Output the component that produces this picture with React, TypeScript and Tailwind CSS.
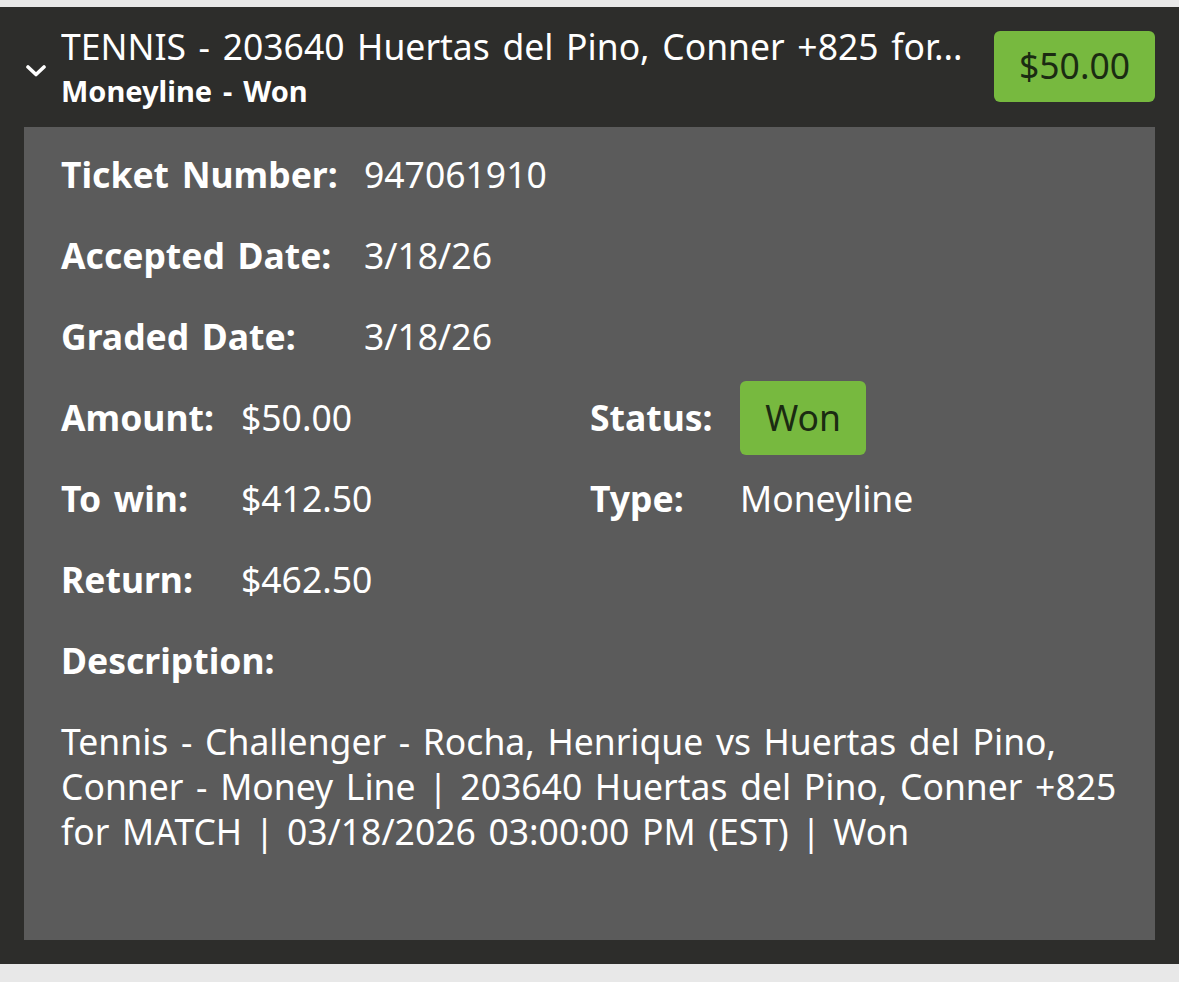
const rows = [
  { label: 'Ticket Number:', value: '947061910' },
  { label: 'Accepted Date:', value: '3/18/26' },
  { label: 'Graded Date:', value: '3/18/26' },
];

export default function App() {
  return (
    <div className="min-h-[982px] bg-[#e8e8e8] pt-[7px] font-['Noto_Sans',sans-serif] [word-spacing:3.4px]">
      <div className="bg-[#2d2d2b] pb-[24px]">
        <div className="flex h-[120px] items-center pl-[26px] pr-[24px]">
          <svg width="20" height="12" viewBox="0 0 20 12" className="mr-[15px] mt-[8px] shrink-0">
            <path d="M2 2 L10 9.5 L18 2" fill="none" stroke="#fff" strokeWidth="3.6" strokeLinecap="round" strokeLinejoin="round" />
          </svg>
          <div className="min-w-0 flex-1 pt-[2px] text-white">
            <div className="overflow-hidden whitespace-nowrap text-[35.5px] leading-[46px]">TENNIS - 203640 Huertas del Pino, Conner +825 for...</div>
            <div className="text-[29px] font-bold leading-[44px]">Moneyline - Won</div>
          </div>
          <div className="ml-[28px] mt-[-2px] flex h-[71px] w-[161px] shrink-0 items-center justify-center rounded-[6px] bg-[#77b93f] text-[35.5px] text-[#1b2b12]">
            $50.00
          </div>
        </div>
        <div className="mx-[24px] bg-[#5b5b5b] px-[37px] pt-[7px] pb-[86px] text-[35.5px] text-white">
          {rows.map((r) => (
            <div key={r.label} className="flex h-[81px] items-center">
              <span className="w-[303px] font-bold">{r.label}</span>
              <span>{r.value}</span>
            </div>
          ))}
          <div className="grid h-[81px] grid-cols-[529px_150px_1fr] items-center">
            <div className="flex">
              <span className="w-[180px] font-bold">Amount:</span>
              <span>$50.00</span>
            </div>
            <span className="font-bold">Status:</span>
            <div>
              <span className="inline-flex h-[74px] w-[126px] items-center justify-center rounded-[6px] bg-[#77b93f] text-[#1b2b12]">Won</span>
            </div>
          </div>
          <div className="grid h-[81px] grid-cols-[529px_150px_1fr] items-center">
            <div className="flex">
              <span className="w-[180px] font-bold">To win:</span>
              <span>$412.50</span>
            </div>
            <span className="font-bold">Type:</span>
            <span>Moneyline</span>
          </div>
          <div className="flex h-[81px] items-center">
            <span className="w-[180px] font-bold">Return:</span>
            <span>$462.50</span>
          </div>
          <div className="flex h-[81px] items-center font-bold">Description:</div>
          <p className="mt-[18px] leading-[45px]">
            Tennis - Challenger - Rocha, Henrique vs Huertas del Pino, Conner - Money Line | 203640 Huertas del Pino, Conner +825 for MATCH | 03/18/2026 03:00:00 PM (EST) | Won
          </p>
        </div>
      </div>
    </div>
  );
}
